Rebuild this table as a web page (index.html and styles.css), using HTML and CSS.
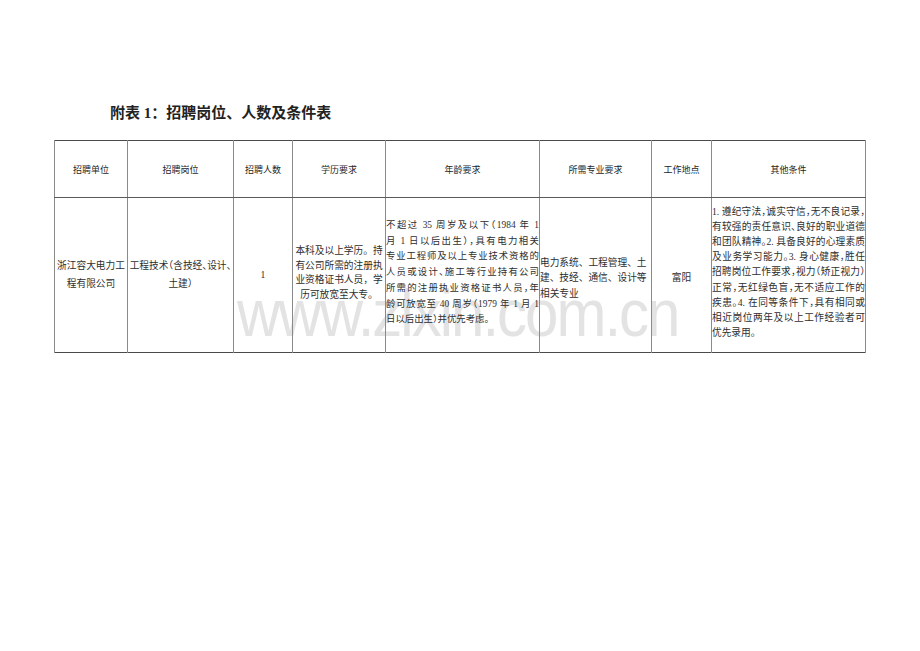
FILE: index.html
```html
<!DOCTYPE html>
<html lang="zh-CN">
<head>
<meta charset="utf-8">
<title>附表1</title>
<link rel="stylesheet" href="styles.css">
</head>
<body>
<div class="page">
  <h1 class="title">附表 1：招聘岗位、人数及条件表</h1>
  <table class="grid">
    <colgroup>
      <col class="c1"><col class="c2"><col class="c3"><col class="c4">
      <col class="c5"><col class="c6"><col class="c7"><col class="c8">
    </colgroup>
    <thead>
      <tr class="head">
        <th>招聘单位</th>
        <th>招聘岗位</th>
        <th>招聘人数</th>
        <th>学历要求</th>
        <th>年龄要求</th>
        <th>所需专业要求</th>
        <th>工作地点</th>
        <th>其他条件</th>
      </tr>
    </thead>
    <tbody>
      <tr class="body">
        <td class="center tall"><span class="ln">浙江容大电力工</span><span class="ln">程有限公司</span></td>
        <td class="center tall halt"><span class="ln">工程技术（含技经、设计、</span><span class="ln">土建）</span></td>
        <td class="center tall">1</td>
        <td class="center edu"><span class="ln">本科及以上学历。持</span><span class="ln">有公司所需的注册执</span><span class="ln">业资格证书人员，学</span><span class="ln">历可放宽至大专。</span></td>
        <td class="just age"><span class="ln">不超过 35 周岁及以下（1984 年 1</span><span class="ln">月 1 日以后出生），具有电力相关</span><span class="ln">专业工程师及以上专业技术资格的</span><span class="ln">人员或设计、施工等行业持有公司</span><span class="ln">所需的注册执业资格证书人员，年</span><span class="ln">龄可放宽至 40 周岁（1979 年 1 月 1</span><span class="ln last">日以后出生）并优先考虑。</span></td>
        <td class="left major"><span class="ln">电力系统、工程管理、土</span><span class="ln">建、技经、通信、设计等</span><span class="ln">相关专业</span></td>
        <td class="center place">富阳</td>
        <td class="just other"><span class="ln">1. 遵纪守法，诚实守信，无不良记录，</span><span class="ln">有较强的责任意识、良好的职业道德</span><span class="ln">和团队精神。2. 具备良好的心理素质</span><span class="ln">及业务学习能力。3. 身心健康，胜任</span><span class="ln">招聘岗位工作要求，视力（矫正视力）</span><span class="ln">正常，无红绿色盲，无不适应工作的</span><span class="ln">疾患。4. 在同等条件下，具有相同或</span><span class="ln">相近岗位两年及以上工作经验者可</span><span class="ln last">优先录用。</span></td>
      </tr>
    </tbody>
  </table>
  <div class="watermark" aria-hidden="true">www.zlxin.com.cn</div>
</div>
</body>
</html>
```

FILE: styles.css
```css
html, body {
  margin: 0;
  padding: 0;
  background: #ffffff;
}

.page {
  position: relative;
  width: 920px;
  height: 651px;
  box-sizing: border-box;
  padding: 103px 0 0 54px;
  font-family: "Liberation Serif", "Noto Sans CJK SC", serif;
  color: #2e2e2e;
}

.title {
  margin: 0 0 17px 56px;
  font-size: 15px;
  line-height: 20px;
  font-weight: 700;
  color: #222222;
  font-family: "Liberation Serif", "Noto Sans CJK SC", serif;
}

.grid {
  position: relative;
  z-index: 1;
  width: 811px;
  table-layout: fixed;
  border-collapse: collapse;
  border: 1px solid #4a4a4a;
}

.c1 { width: 73px; }
.c2 { width: 106px; }
.c3 { width: 59px; }
.c4 { width: 93px; }
.c5 { width: 154px; }
.c6 { width: 112px; }
.c7 { width: 60px; }
.c8 { width: 154px; }

.grid th,
.grid td {
  border-left: 1px solid #8a8a8a;
  border-right: 1px solid #8a8a8a;
  padding: 0;
  vertical-align: middle;
  background: transparent;
}

.head {
  height: 57px;
}

.head th {
  border-bottom: 1px solid #5a5a5a;
  font-family: "Noto Sans CJK SC", "Liberation Sans", sans-serif;
  font-size: 9px;
  font-weight: 400;
  color: #1e1e1e;
  text-align: center;
}

.body {
  height: 155px;
}

.body td {
  font-size: 9.7px;
  padding-bottom: 4px;
}

.ln {
  display: block;
  white-space: nowrap;
}

.center { text-align: center; }
.left { text-align: left; }

.tall {
  line-height: 17.6px;
}
.body td.tall { padding-bottom: 0; }

.halt {
  font-feature-settings: "halt";
}

.edu { line-height: 14.5px; }

.age {
  line-height: 15.8px;
  font-feature-settings: "halt";
}
.body td.age { font-size: 9.4px; }

.major { line-height: 15.1px; }
.place { line-height: 15.1px; }
.body td.major,
.body td.place {
  padding-bottom: 0;
  padding-top: 6px;
}

.other {
  line-height: 15.1px;
  font-feature-settings: "halt";
}
.body td.other { padding-bottom: 6px; }

.just .ln {
  text-align: justify;
  text-align-last: justify;
}
.just .ln.last {
  text-align-last: left;
}

.watermark {
  position: absolute;
  z-index: 0;
  left: 237px;
  top: 286px;
  font-family: "Liberation Sans", Arial, sans-serif;
  font-size: 60px;
  line-height: 60px;
  letter-spacing: -2px;
  color: #e3e3e3;
  white-space: nowrap;
  transform: scaleY(1.1);
  transform-origin: 0 51px;
  pointer-events: none;
}
```
